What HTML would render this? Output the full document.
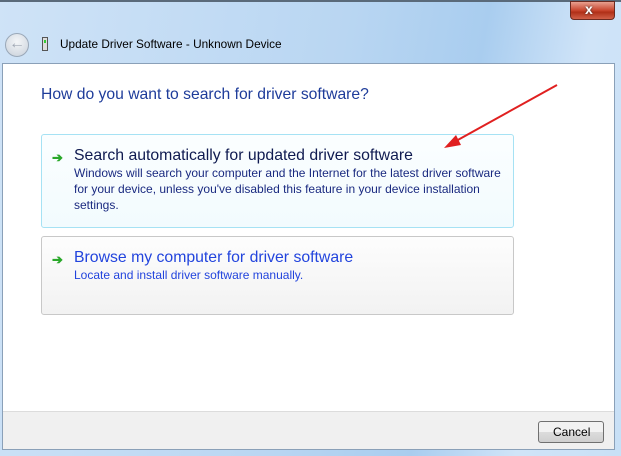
<!DOCTYPE html>
<html><head><meta charset="utf-8"><style>
*{margin:0;padding:0;box-sizing:border-box}
body{width:621px;height:456px;overflow:hidden;position:relative;font-family:"Liberation Sans",sans-serif;background:linear-gradient(100deg,#cfe3f7 0%,#b9d6f2 50%,#a9cdef 70%,#d0e4f8 85%,#c8e0f6 100%)}
.abs{position:absolute}
#content{left:2px;top:63px;width:613px;height:387px;background:#fff;border:1px solid #8aa0b8}
#footer{left:3px;top:411px;width:611px;height:38px;background:#f0f0f0;border-top:1px solid #dcdcdc}
.box{position:absolute;left:41px;width:473px;border-radius:3px}
.t{position:absolute;white-space:nowrap}
</style></head><body>
<div class="abs" style="left:0;top:0;width:621px;height:2px;background:#5a6a7a"></div>
<div class="abs" style="left:570px;top:1px;width:45px;height:19px;border:1px solid #6b2a20;border-radius:0 0 4px 4px;background:linear-gradient(#e8a090,#c8442c 50%,#b03018 60%,#d06048)"></div>
<div class="t" style="left:585px;top:1px;color:#fff;font-weight:bold;font-size:14px;text-shadow:0 0 2px #333">x</div>
<div class="abs" style="left:5px;top:33px;width:24px;height:24px;border-radius:50%;border:1px solid #9aa8b8;background:radial-gradient(circle at 50% 35%,#f4f6f8,#c8d0da)"></div>
<div class="t" style="left:9px;top:35px;color:#a0a8b4;font-size:16px;font-weight:bold">←</div>
<div class="abs" style="left:42px;top:37px;width:6px;height:14px;border:1px solid #555;background:#ddd"></div>
<div class="abs" style="left:44px;top:40px;width:2px;height:3px;background:#3c3"></div>
<div class="t" style="left:60px;top:37px;font-size:11.8px;color:#000">Update Driver Software - Unknown Device</div>
<div id="content" class="abs"></div>
<div id="footer" class="abs"></div>
<div class="t" style="left:41px;top:86px;font-size:15.7px;color:#1e3c9a">How do you want to search for driver software?</div>
<div class="box" style="top:134px;height:94px;border:1px solid #a6e2f4;background:linear-gradient(#fbfeff,#f2fbfe)"></div>
<div class="t" style="left:52px;top:150px;color:#2aa82a;font-size:13px;font-weight:bold">➔</div>
<div class="t" style="left:74px;top:147px;font-size:15.8px;color:#0f1a50">Search automatically for updated driver software</div>
<div class="t" style="left:74px;top:165px;font-size:12px;color:#1a2a80;line-height:16px">Windows will search your computer and the Internet for the latest driver software<br>for your device, unless you've disabled this feature in your device installation<br>settings.</div>
<div class="box" style="top:236px;height:79px;border:1px solid #c8c8c8;background:linear-gradient(#fdfdfd,#f2f2f2)"></div>
<div class="t" style="left:52px;top:252px;color:#2aa82a;font-size:13px;font-weight:bold">➔</div>
<div class="t" style="left:74px;top:249px;font-size:15.8px;color:#2244dd">Browse my computer for driver software</div>
<div class="t" style="left:74px;top:268px;font-size:12px;color:#2244dd">Locate and install driver software manually.</div>
<div class="abs" style="left:538px;top:421px;width:66px;height:22px;border:1px solid #707070;border-radius:3px;background:linear-gradient(#f2f2f2 50%,#dcdcdc 50%,#cfcfcf)"></div>
<div class="t" style="left:553px;top:425px;font-size:12px;color:#000">Cancel</div>
<svg class="abs" style="left:0;top:0" width="621" height="456">
<line x1="557" y1="85" x2="456" y2="141" stroke="#e02020" stroke-width="2"/>
<polygon points="444,148 456,135 461,145" fill="#e02020"/>
</svg>
</body></html>
